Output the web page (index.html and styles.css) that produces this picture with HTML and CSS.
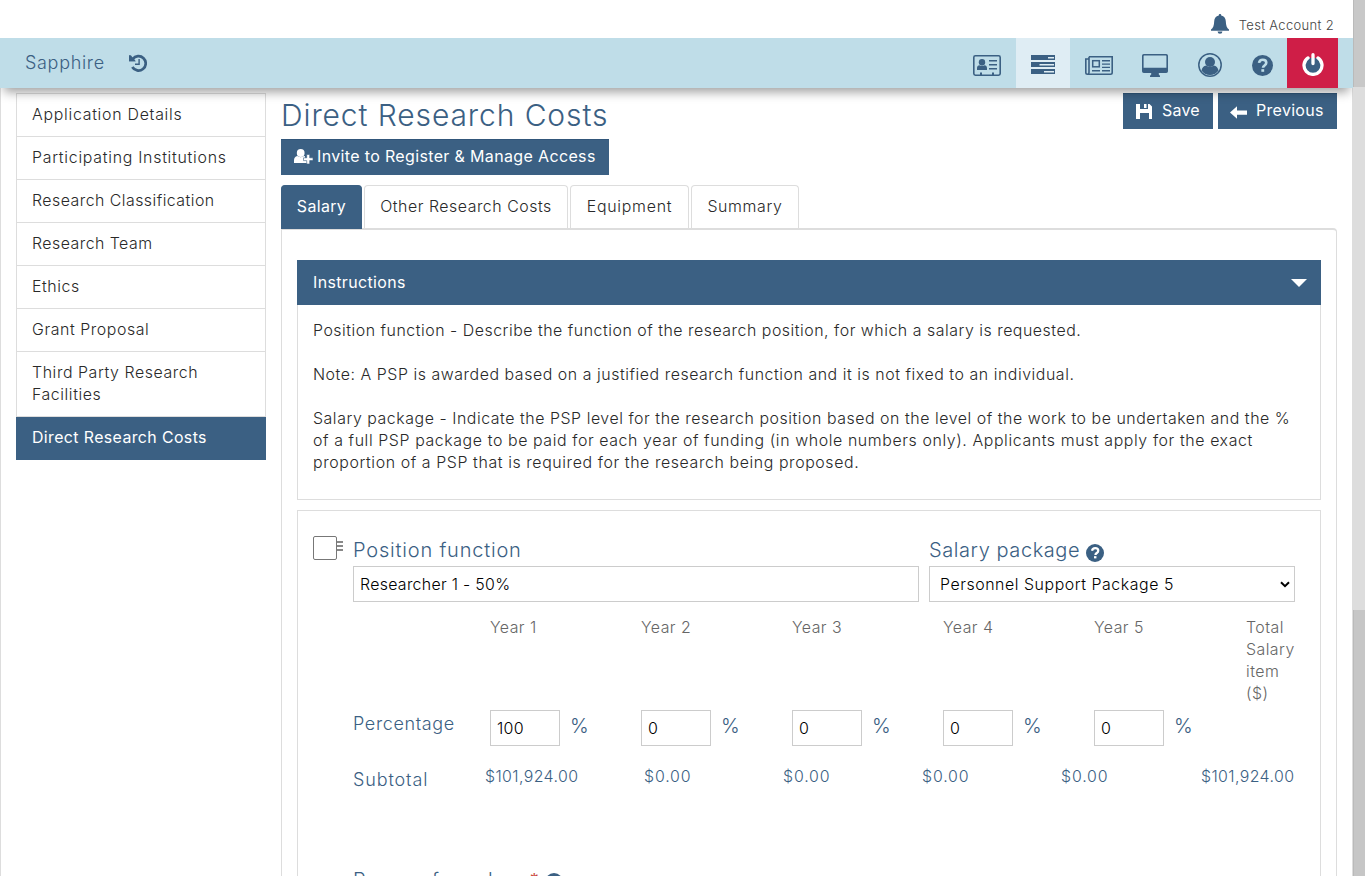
FILE: index.html
```html
<!DOCTYPE html>
<html lang="en">
<head>
<meta charset="utf-8">
<title>Direct Research Costs</title>
<link rel="stylesheet" href="styles.css">
</head>
<body>
<div class="page">
  <div class="account">
    <svg class="bell" width="18" height="20" viewBox="0 0 18 20"><path d="M9 0c.9 0 1.3.6 1.2 1.4 3 .6 4.500 2.800 4.600 5.800.1 4.300 1.100 6.600 3.200 8.400v1.200H0v-1.200c2.100-1.800 3.100-4.100 3.200-8.400.1-3 1.600-5.200 4.600-5.800C7.700.6 8.100 0 9 0zM6.600 17.400h4.800a2.400 2.400 0 0 1-4.800 0z"/></svg>
    <span>Test Account 2</span>
  </div>
  <header class="nav">
    <span class="brand">Sapphire</span>
    <svg class="history" width="18" height="18" viewBox="0 0 18 18"><path d="M3.700 5.100A7.200 7.200 0 1 1 3.300 13" fill="none" stroke="#3b6083" stroke-width="2.700"/><path d="M0 1.200V7.200H6.500z"/><path d="M0 1.200h1.800l5 6H0z"/><path d="M10.100 5v5.200H6" fill="none" stroke="#3b6083" stroke-width="1.400"/></svg>
    <nav class="icons">
      <a class="ic card"><svg width="28" height="21" viewBox="0 0 28 21"><rect x=".8" y=".8" width="26.400" height="19.400" rx="1.600" fill="none" stroke="#3b6083" stroke-width="1.600"/><circle cx="9" cy="7.300" r="3.200"/><path d="M4 15v-2c0-1.700 1-2.800 2.500-2.800.7.700 4.300.7 5 0 1.500 0 2.500 1.100 2.500 2.800v2zM16 5h8v1.500h-8zM16 9h8v1.500h-8zM16 13h8v1.500h-8zM7 17.500h2V20H7zM19 17.500h2V20h-2z"/></svg></a>
      <a class="ic tasks"><svg width="24" height="19" viewBox="0 0 24 19"><path d="M0 0h24v5H0zM0 7h24v5H0zM0 14h24v5H0z"/><path d="M17 2h6v1.500h-6zM8.500 9H23v1.500H8.500zM13 16h10v1.500H13z" fill="#dfedf4"/></svg></a>
      <a class="ic news"><svg width="28" height="19" viewBox="0 0 28 19"><path d="M4 .8h23.200v15.700q0 1.700-1.700 1.700H2.500Q.8 18.200.8 16.500V3H4M4 .8v15.700q0 1.700-1.600 1.700" fill="none" stroke="#3b6083" stroke-width="1.600"/><rect x="7.700" y="4.700" width="6.600" height="6.100" fill="none" stroke="#3b6083" stroke-width="1.500"/><path d="M17 4h8v1.400h-8zM17 7.400h8v1.400h-8zM17 10.700h8v1.400h-8zM7 14h8v1.400H7zM17 14h8v1.400h-8z"/></svg></a>
      <a class="ic desk"><svg width="26" height="23" viewBox="0 0 26 23"><path fill-rule="evenodd" d="M1.800 0h22.400Q26 0 26 1.800v15.400q0 1.800-1.800 1.800h-7.400v1.500l1.200 1.200V23H8v-1.300l1.200-1.200V19H1.800Q0 19 0 17.200V1.800Q0 0 1.800 0zM1.600 2.200v11.600h22.800V2.200q0-.6-.6-.6H2.200q-.6 0-.6.6z"/></svg></a>
      <a class="ic user"><svg width="24" height="24" viewBox="0 0 24 24"><circle cx="12" cy="12" r="11.200" fill="none" stroke="#3b6083" stroke-width="1.500"/><circle cx="12" cy="9" r="5"/><path d="M3.500 17.500c.7-3 2.200-4.600 4.700-4.900 2.200 1.700 5.400 1.700 7.600 0 2.500.3 4 1.900 4.700 4.900-2.200 3-5.100 4.500-8.500 4.500s-6.300-1.500-8.500-4.500z"/></svg></a>
      <a class="ic help"><svg width="21" height="21" viewBox="0 0 20 20"><circle cx="10" cy="10" r="10"/><path d="M6.700 7.500C7 5.600 8.300 4.500 10.200 4.500c2 0 3.400 1.100 3.400 2.900 0 2.600-3.100 2.500-3.100 4.700" fill="none" stroke="#bfdde8" stroke-width="2.500"/><path d="M8.900 13.500h2.700V16H8.900z" fill="#bfdde8"/></svg></a>
      <a class="ic power"><svg width="22" height="23" viewBox="0 0 22 23" fill="none" stroke="#fff" stroke-width="3.300" stroke-linecap="round"><path d="M6 4.900a9 9 0 1 0 10 0M11 1.700v8.800"/></svg></a>
    </nav>
  </header>
  <div class="content">
    <aside class="side">
      <a class="wide">Application Details</a>
      <a class="wide">Participating Institutions</a>
      <a class="tight">Research Classification</a>
      <a class="tight">Research Team</a>
      <a>Ethics</a>
      <a>Grant Proposal</a>
      <a>Third Party Research<br>Facilities</a>
      <a class="on">Direct Research Costs</a>
    </aside>
    <main>
      <div class="head">
        <h1>Direct Research Costs</h1>
        <div class="actions">
          <button class="btn save"><svg width="16" height="15" viewBox="0 0 16 15"><path fill-rule="evenodd" d="M0 0h13.500L16 2.500V15h-3V9H4v6H0zM4 0v5h8V0zM8 0h2.500v4H8z"/></svg><span>Save</span></button>
          <button class="btn prev"><svg width="17" height="13" viewBox="0 0 17 13"><path d="M0 6.500 7 .3V4.500h10v4.300H7v4z"/></svg><span>Previous</span></button>
        </div>
      </div>
      <button class="btn invite"><svg width="20" height="15" viewBox="0 0 20 15"><circle cx="6.700" cy="4" r="3.900"/><path d="M0 14v-2.500C0 9 1.200 7.300 3.300 7c2 1.500 4.700 1.500 6.700 0l1 .3V11h3v3z"/><path d="M12.700 5.500h3v3.300H19v2.800h-3.300V15h-3v-3.400H9.500V8.800h3.200z" stroke="#3b6083" stroke-width=".6"/></svg><span>Invite to Register &amp; Manage Access</span></button>
      <div class="tabs"><a class="on">Salary</a><a class="t2">Other Research Costs</a><a class="t3">Equipment</a><a class="t4">Summary</a></div>
      <section class="panel">
        <div class="ihead"><span>Instructions</span><i></i></div>
        <div class="ibody">
          <p>Position function - Describe the function of the research position, for which a salary is requested.</p>
          <p class="note">Note: A PSP is awarded based on a justified research function and it is not fixed to an individual.</p>
          <p><span class="l1">Salary package - Indicate the PSP level for the research position based on the level of the work to be undertaken and the %</span><br><span class="l2">of a full PSP package to be paid for each year of funding (in whole numbers only). Applicants must apply for the exact</span><br><span class="l2">proportion of a PSP that is required for the research being proposed.</span></p>
        </div>
        <div class="item">
          <div class="pick"><span class="box"></span><span class="grip"></span></div>
          <div class="form">
            <div class="fields">
              <div class="field"><label class="lab">Position function</label><div class="input">Researcher 1 - 50%</div></div>
              <div class="field"><label class="lab pk">Salary package<svg width="18" height="18" viewBox="0 0 20 20"><circle cx="10" cy="10" r="10"/><path d="M6.700 7.500C7 5.600 8.300 4.500 10.200 4.500c2 0 3.400 1.100 3.400 2.900 0 2.600-3.100 2.500-3.100 4.700" fill="none" stroke="#fff" stroke-width="2.500"/><path d="M8.900 13.500h2.700V16H8.900z" fill="#fff"/></svg></label><div class="input select"><span>Personnel Support Package 5</span><svg width="10" height="7" viewBox="0 0 10 7"><path d="M1 1.200 5 5.200 9 1.200" fill="none" stroke="#000" stroke-width="2"/></svg></div></div>
            </div>
            <div class="years"><span></span><span>Year 1</span><span>Year 2</span><span>Year 3</span><span>Year 4</span><span>Year 5</span><span>Total<br>Salary<br>item<br>($)</span></div>
            <div class="pct"><span class="rl">Percentage</span>
              <div><b>100</b><span>%</span></div><div><b>0</b><span>%</span></div><div><b>0</b><span>%</span></div><div><b>0</b><span>%</span></div><div><b>0</b><span>%</span></div>
            </div>
            <div class="sub"><span class="rl">Subtotal</span><span class="big">$101,924.00</span><span>$0.00</span><span>$0.00</span><span>$0.00</span><span>$0.00</span><span class="big">$101,924.00</span></div>
            <div class="reason"><label class="lab">Reason for salary</label><em>*</em><svg width="18" height="18" viewBox="0 0 20 20"><circle cx="10" cy="10" r="10"/></svg></div>
          </div>
        </div>
      </section>
    </main>
  </div>
</div>
<div class="scroll"><div class="s1"></div><div class="s2"></div><div class="s3"></div></div>
</body>
</html>
```
FILE: styles.css
```css
* { box-sizing: border-box; }
body { margin: 0; height: 876px; overflow: hidden; display: flex; background: #fff; color: #292929; font: 300 15.900px/22px Inter, "Open Sans", sans-serif; letter-spacing: .52px; }
svg { fill: #3b6083; flex: none; display: block; }
.page { width: 1353px; height: 876px; overflow: hidden; }
.scroll { width: 12px; display: flex; flex-direction: column; }
.s1 { height: 87px; background: #c8c8c8; border-left: 1px solid #bababa; }
.s2 { height: 523px; background: #ddd; }
.s3 { flex: 1; background: #c6c6c6; border-left: 1px solid #bababa; }
.account { height: 38px; display: flex; justify-content: flex-end; padding: 14px 19px 0 0; font-size: 13px; line-height: 23px; color: #444; gap: 10px; letter-spacing: .32px; }
.nav { position: relative; height: 50px; background: #bfdde8; box-shadow: 0 8px 10px -4px rgba(0,0,0,.38); display: flex; align-items: center; padding-left: 25px; }
.brand { font-size: 18px; color: #3b6083; width: 79px; margin-right: 25px; letter-spacing: .68px; }
.icons { margin-left: auto; display: flex; height: 50px; padding-right: 15px; }
.ic { display: flex; justify-content: center; align-items: center; padding-top: 4px; }
.card { width: 58px; }
.tasks { width: 54px; background: #dfedf4; padding-top: 3px; }
.news { width: 56px; padding-left: 1px; }
.desk { width: 57px; }
.user { width: 54px; }
.help { width: 50px; }
.power { width: 51px; background: #cf1e47; padding-top: 3px; }
.content { height: 788px; padding: 5px 15px 0; border: solid #ddd; border-width: 0 1px; display: flex; gap: 15px; align-items: flex-start; }
.side { width: 250px; display: flex; flex-direction: column; border: 1px solid #ddd; border-bottom: 0; letter-spacing: .57px; }
.side a { padding: 10px 15px; border-bottom: 1px solid #ddd; }
.side .wide { letter-spacing: .73px; }
.side .tight { letter-spacing: .47px; }
.side .on { background: #3b6083; color: #fff; margin: 0 -1px; padding: 10px 16px; font-weight: 400; border-color: #3b6083; letter-spacing: .39px; }
main { width: 1056px; }
.head { height: 46px; display: flex; justify-content: space-between; }
h1 { margin: 0; font-size: 30px; font-weight: 300; line-height: 44px; color: #3b6083; letter-spacing: .9px; }
.actions { display: flex; gap: 5px; }
.btn { height: 36px; border: 0; border-top: 1px solid #31567a; background: #3b6083; color: #fff; font: 400 16px/22px Inter, sans-serif; display: flex; align-items: center; padding: 0 0 3px; letter-spacing: .2px; }
.btn svg { fill: #fff; margin-top: 4px; }
.save { width: 90px; padding-left: 13px; gap: 10px; }
.save svg { margin-top: 3px; }
.prev { width: 119px; padding-left: 12px; gap: 9px; letter-spacing: .3px; }
.invite { width: 328px; padding-left: 13px; gap: 3px; white-space: nowrap; letter-spacing: .35px; }
.invite svg { margin-top: 1px; }
.tabs { display: flex; gap: 2px; margin-top: 10px; height: 44px; }
.tabs a { border: 1px solid #ddd; border-bottom: 0; border-radius: 4px 4px 0 0; padding: 10px 0; text-align: center; }
.tabs .on { background: #3b6083; border-color: #3b6083; color: #fff; font-weight: 400; width: 81px; letter-spacing: .38px; }
.t2 { width: 204px; } .t3 { width: 119px; letter-spacing: .75px; } .t4 { width: 108px; letter-spacing: .65px; }
.panel { height: 720px; border: 1px solid #ddd; border-top-width: 2px; border-radius: 0 4px 0 0; margin-top: -1px; padding: 30px 15px 0; }
.ihead { height: 45px; background: #3b6083; color: #fff; font-weight: 400; display: flex; justify-content: space-between; align-items: center; padding: 0 14px 0 16px; letter-spacing: .4px; }
.ihead i { border: 8px solid transparent; border-top-color: #fff; border-bottom: 0; }
.ibody { height: 195px; border: 1px solid #ddd; border-top: 0; padding: 15px; white-space: nowrap; }
.ibody p { margin: 0 0 22px; }
.ibody .note, .l1 { letter-spacing: .55px; }
.l2 { letter-spacing: .6px; }
.item { height: 420px; margin-top: 10px; border: 1px solid #ddd; padding: 25px 25px 0 15px; display: flex; }
.pick { width: 40px; display: flex; }
.box { width: 24px; height: 24px; border: 1px solid #777; border-radius: 2px; }
.grip { width: 6px; height: 10px; margin-top: 5px; border: solid #888; border-width: 2px 0; background: linear-gradient(#888,#888) 0 2px/6px 2px no-repeat; }
.form { width: 942px; }
.fields { display: flex; gap: 10px; }
.field { width: 566px; }
.field + .field { width: 366px; }
.lab { font-size: 20px; line-height: 29px; height: 30px; color: #3b6083; display: flex; letter-spacing: .8px; }
.pk { letter-spacing: .57px; }
.pk svg { margin: 8px 0 0 6px; }
.input { height: 36px; border: 1px solid #ccc; color: #000; padding: 7px 6px 5px; letter-spacing: .3px; }
.select { padding: 6px 4px 5px 10px; display: flex; justify-content: space-between; align-items: center; letter-spacing: .55px; }
.years { display: grid; grid-template-columns: 137px repeat(5, 151px) 50px; height: 108px; padding-top: 15px; color: #666; letter-spacing: .45px; }
.years span:last-child { padding-left: 1px; }
.rl { font-size: 18px; letter-spacing: .7px; }
.pct { display: grid; grid-template-columns: 137px repeat(5, 151px); height: 36px; color: #3b6083; }
.pct div { display: flex; gap: 10px; font-size: 20px; line-height: 32px; letter-spacing: 0; }
.pct .rl { line-height: 27px; letter-spacing: .63px; }
.pct b { width: 70px; height: 36px; border: 1px solid #ccc; color: #000; font-size: 16px; line-height: 35px; font-weight: 300; padding-left: 6px; letter-spacing: .3px; }
.sub { color: #3b6083; display: grid; grid-template-columns: 132px 159px 139px 139px 139px 140px 94px; margin-top: 20px; height: 100px; letter-spacing: .85px; }
.sub .rl { padding-top: 3px; letter-spacing: .88px; }
.sub .big { letter-spacing: .4px; }
.reason { display: flex; }
.reason .lab { letter-spacing: .6px; }
.reason em { color: #c9453c; font: 400 18px/30px Inter, sans-serif; margin-left: 5px; letter-spacing: 0; }
.reason svg { margin: 7px 0 0 6px; }
```
